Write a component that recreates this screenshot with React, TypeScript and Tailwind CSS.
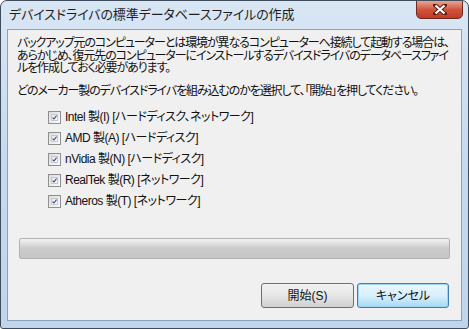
import { useState } from 'react';

const JP = "font-['Liberation_Sans','Noto_Sans_CJK_JP',sans-serif] [font-feature-settings:'palt']";

const VENDORS = [
  { id: 'intel', label: 'Intel 製(I) [ハードディスク、ネットワーク]' },
  { id: 'amd', label: 'AMD 製(A) [ハードディスク]' },
  { id: 'nvidia', label: 'nVidia 製(N) [ハードディスク]' },
  { id: 'realtek', label: 'RealTek 製(R) [ネットワーク]' },
  { id: 'atheros', label: 'Atheros 製(T) [ネットワーク]' },
];

function CheckBox({ checked, onToggle }: { checked: boolean; onToggle: () => void }) {
  return (
    <button
      type="button"
      onClick={onToggle}
      className="w-[13px] h-[13px] border border-[#8f8f8f] bg-gradient-to-br from-[#dcdcdc] to-[#fbfbfb] p-[2px] shrink-0"
    >
      <span className="block w-full h-full border border-[#c8c8c8] bg-gradient-to-br from-[#e4e4e4] to-[#ffffff]">
        {checked && (
          <svg viewBox="0 0 7 7" className="w-full h-full" fill="none" stroke="#2c4e9e" strokeWidth="1.6">
            <path d="M0.8 3.6 L2.8 5.6 L6.4 0.8" />
          </svg>
        )}
      </span>
    </button>
  );
}

export default function App() {
  const [checked, setChecked] = useState<Record<string, boolean>>(
    Object.fromEntries(VENDORS.map(v => [v.id, true])),
  );

  return (
    <div className={`w-[469px] h-[329px] bg-white ${JP}`}>
      <div className="h-full flex flex-col rounded-t-[7px] rounded-b-[3px] border border-[#3e4c5c] bg-gradient-to-b from-[#d9e6f4] via-[#c5d9ef] to-[#c0d5ec] overflow-hidden">
        {/* title bar */}
        <div className="h-[28px] flex items-start justify-between pl-[8px] pr-[5px]">
          <span className="mt-[6px] text-[13px] leading-[16px] text-[#1e1e1e] tracking-[-0.1px] whitespace-nowrap">
            デバイスドライバの標準データベースファイルの作成
          </span>
          <button
            type="button"
            className="w-[47px] h-[19px] -mt-px rounded-b-[5px] border border-[#6b2d22] bg-gradient-to-b from-[#e8a493] via-[#d0553e] to-[#c23a1e] grid place-items-center"
          >
            <svg width="14" height="11" viewBox="0 0 14 11">
              <path d="M2 1 L12 10 M12 1 L2 10" stroke="#5a1d12" strokeWidth="4" strokeLinecap="square" />
              <path d="M2.5 1.5 L11.5 9.5 M11.5 1.5 L2.5 9.5" stroke="#ffffff" strokeWidth="2.2" />
            </svg>
          </button>
        </div>

        {/* client area */}
        <div className="flex-1 mx-[6px] mb-[7px] border border-[#8ca2bc] bg-[#f0f0f0] flex flex-col text-[12px] text-[#111] tracking-[-1.1px]">
          <div className="pl-[9px] pr-[4px] pt-[7px] leading-[12.5px] whitespace-nowrap">
            <p>
              バックアップ元のコンピューターとは環境が異なるコンピューターへ接続して起動する場合は、
              <br />
              あらかじめ、復元先のコンピューターにインストールするデバイスドライバのデータベースファイ
              <br />
              ルを作成しておく必要があります。
            </p>
            <p className="mt-[10px]">どのメーカー製のデバイスドライバを組み込むのかを選択して、「開始」を押してください。</p>
          </div>

          <ul className="mt-[14px] pl-[40px] flex flex-col gap-[8px] tracking-[-0.5px]">
            {VENDORS.map(v => (
              <li key={v.id} className="flex items-center gap-[4px] h-[13px]">
                <CheckBox
                  checked={checked[v.id]}
                  onToggle={() => setChecked(c => ({ ...c, [v.id]: !c[v.id] }))}
                />
                <span className="leading-[13px]">{v.label}</span>
              </li>
            ))}
          </ul>

          {/* progress bar */}
          <div className="mt-[30px] mx-[11px] h-[21px] rounded-[2px] border border-[#b2b2b2] bg-gradient-to-b from-[#f3f3f3] via-[#cbcbcb] to-[#c6c6c6] p-px">
            <div className="h-full rounded-[1px] border-t border-[#ececec]" />
          </div>

          <div className="mt-auto mb-[12px] mr-[12px] flex justify-end gap-[3px] tracking-normal">
            <button
              type="button"
              className="w-[93px] h-[25px] rounded-[3px] border border-[#707070] bg-gradient-to-b from-[#f2f2f2] via-[#e6e6e6] to-[#d0d0d0] text-[12px]"
            >
              開始(S)
            </button>
            <button
              type="button"
              className="w-[92px] h-[25px] rounded-[3px] border border-[#3c7fb1] bg-gradient-to-b from-[#eaf6fd] via-[#d9f0fc] to-[#a7d9f5] text-[12px] shadow-[inset_0_0_0_1px_#9fd5f2]"
            >
              キャンセル
            </button>
          </div>
        </div>
      </div>
    </div>
  );
}
